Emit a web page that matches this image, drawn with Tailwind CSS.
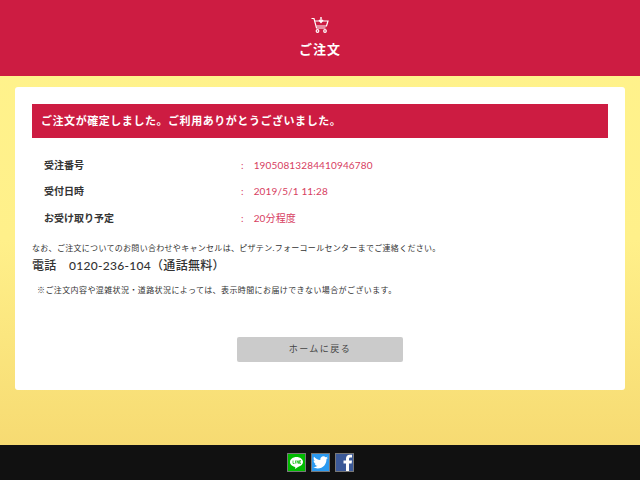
<!DOCTYPE html>
<html lang="ja">
<head>
    <meta charset="UTF-8">
    <meta name="viewport" content="width=device-width, initial-scale=1.0">
    <title>ご注文</title>
    <script src="https://cdn.jsdelivr.net/npm/@tailwindcss/browser@4"></script>
</head>
<body class="w-[640px] h-[480px] overflow-hidden font-['Lato','Noto_Sans_CJK_JP',sans-serif] text-[#333]">
    <div class="flex flex-col h-[480px] bg-gradient-to-b from-[#fff38c] via-[#fff08a] to-[#f5d76e]">
        <!-- Header -->
        <header class="h-[76px] bg-[#cd1c42] flex flex-col items-center pt-[16px]">
            <svg width="18" height="18" viewBox="0 0 18 18" fill="none" stroke="#fff" stroke-width="1.2">
                <path d="M0.5 2.5h2.5l2.5 9.5h9"/>
                <path d="M4 5h13l-1.500 5H5.500"/>
                <path d="M10 1v5M8 4l2 2.500 2-2.500" stroke-width="1.400"/>
                <circle cx="6.500" cy="15" r="1.300"/>
                <circle cx="14" cy="15" r="1.300"/>
            </svg>
            <h1 class="text-white font-bold text-[13px] tracking-[1px] leading-[20px] mt-[5px]">ご注文</h1>
        </header>

        <!-- Main card -->
        <main class="flex-1 px-[15px] pt-[11px]">
            <div class="bg-white rounded-[3px] h-[303px] px-[17px] pt-[17px]">
                <p class="bg-[#cd1c42] text-white font-bold text-[11px] h-[34px] leading-[34px] pl-[9px] tracking-[0.55px]">ご注文が確定しました。ご利用ありがとうございました。</p>

                <dl class="mt-[14px] text-[10px]">
                    <div class="flex h-[26.500px] items-center">
                        <dt class="w-[209px] pl-[12px] font-bold">受注番号</dt>
                        <dd class="text-[#d7405f] tracking-[0.15px]"><span class="mr-[10px]">:</span>19050813284410946780</dd>
                    </div>
                    <div class="flex h-[26.500px] items-center">
                        <dt class="w-[209px] pl-[12px] font-bold">受付日時</dt>
                        <dd class="text-[#d7405f] tracking-[0.15px]"><span class="mr-[10px]">:</span>2019/5/1 11:28</dd>
                    </div>
                    <div class="flex h-[26.500px] items-center">
                        <dt class="w-[209px] pl-[12px] font-bold">お受け取り予定</dt>
                        <dd class="text-[#d7405f] tracking-[0.15px]"><span class="mr-[10px]">:</span>20分程度</dd>
                    </div>
                </dl>

                <p class="mt-[10px] text-[8px] leading-[12px] tracking-[0.3px]">なお、ご注文についてのお問い合わせやキャンセルは、ピザテン.フォーコールセンターまでご連絡ください。</p>
                <p class="text-[12px] leading-[20px] font-medium mt-[2px] tracking-[0.3px]">電話　0120-236-104（通話無料）</p>
                <p class="mt-[8px] pl-[5px] text-[8px] leading-[12px] tracking-[0.4px]">※ご注文内容や混雑状況・道路状況によっては、表示時間にお届けできない場合がございます。</p>

                <button type="button" class="block mx-auto mt-[41px] w-[166px] h-[25px] bg-[#cbcbcb] rounded-[2px] text-[9px] tracking-[1.5px] text-[#444]">ホームに戻る</button>
            </div>
        </main>

        <!-- Footer -->
        <footer class="h-[35px] bg-[#111] flex items-center justify-center gap-[5px]">
            <span class="w-[19px] h-[19px] bg-[#00b900] border border-[#777] flex items-center justify-center">
                <svg width="15" height="14" viewBox="0 0 15 14">
                    <path d="M7.500 1C3.900 1 1 3.200 1 6c0 2.500 2.300 4.500 5.300 4.900l-.3 2 3-2C12 10 14 8.200 14 6c0-2.800-2.900-5-6.500-5z" fill="#fff"/>
                    <path d="M4 4.500v3h1.500M6.500 4.500v3M8 7.500v-3l1.500 3v-3M12 4.500h-1.500v3H12M10.500 6H12" fill="none" stroke="#00b900" stroke-width=".7"/>
                </svg>
            </span>
            <span class="w-[19px] h-[19px] bg-[#2b9af0] border border-[#777] flex items-center justify-center">
                <svg width="15" height="13" viewBox="0 0 24 20">
                    <path d="M24 2.400c-.9.400-1.800.700-2.800.800 1-.6 1.800-1.600 2.200-2.700-1 .6-2 1-3.100 1.200C19.300.7 18 0 16.600 0c-2.700 0-4.900 2.200-4.900 4.900 0 .4 0 .8.100 1.100C7.700 5.800 4.100 3.900 1.700.9 1.200 1.600 1 2.500 1 3.400c0 1.700.9 3.200 2.200 4.100-.8 0-1.600-.2-2.200-.6v.1c0 2.400 1.700 4.400 3.900 4.800-.4.100-.8.200-1.300.2-.3 0-.6 0-.9-.1.600 2 2.400 3.400 4.600 3.400-1.700 1.300-3.800 2.100-6.100 2.100-.4 0-.8 0-1.200-.1C2.200 18.700 4.800 19.500 7.500 19.500c9.100 0 14-7.500 14-14v-.6c1-.7 1.800-1.600 2.500-2.500z" fill="#fff"/>
                </svg>
            </span>
            <span class="w-[19px] h-[19px] bg-[#3b5998] border border-[#777] overflow-hidden flex items-end justify-end">
                <svg width="11" height="17" viewBox="0 0 11 17">
                    <path d="M4 17V9.500H1.500V6.500H4V4.500C4 2 5.500.7 7.700.7c1 0 1.900.1 2.300.1v2.700H8.500C7.300 3.500 7 4.100 7 5v1.500h3l-.4 3H7V17z" fill="#fff"/>
                </svg>
            </span>
        </footer>
    </div>
</body>
</html>
